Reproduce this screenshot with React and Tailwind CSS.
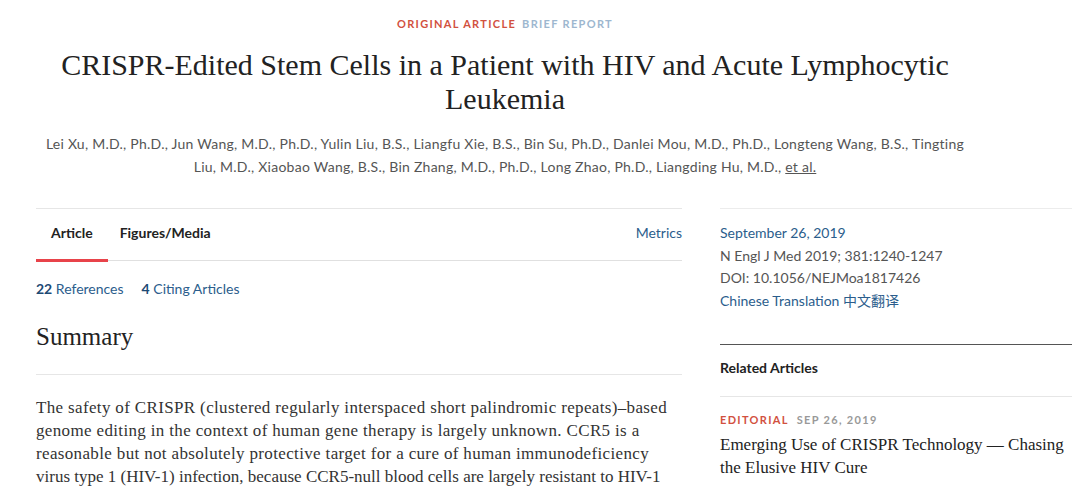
import React from 'react'

const summary = [
  'The safety of CRISPR (clustered regularly interspaced short palindromic repeats)–based',
  'genome editing in the context of human gene therapy is largely unknown. CCR5 is a',
  'reasonable but not absolutely protective target for a cure of human immunodeficiency',
]

export default function App() {
  const sans = { fontFamily: '"Lato", "Noto Sans", sans-serif' }
  return (
    <div className="w-[1080px] h-[486px] overflow-hidden bg-white text-[#333]" style={sans}>
      <header className="w-[1010px] text-center pt-[16px]">
        <div className="text-[11px] font-bold tracking-[0.12em] leading-[16px]">
          <span className="text-[#d2513f]">ORIGINAL ARTICLE</span>
          <span className="ml-[6px] text-[#9db7cf]">BRIEF REPORT</span>
        </div>
        <h1 className="mt-[16px] mx-auto w-[900px] text-[30px] leading-[34px] text-[#222] font-['Liberation_Serif',serif]">
          CRISPR-Edited Stem Cells in a Patient with HIV and Acute Lymphocytic Leukemia
        </h1>
        <p className="mt-[16px] mx-auto w-[960px] text-[14px] leading-[23px] tracking-[0.25px] text-[#555]">
          Lei Xu, M.D., Ph.D., Jun Wang, M.D., Ph.D., Yulin Liu, B.S., Liangfu Xie, B.S., Bin Su, Ph.D., Danlei Mou, M.D., Ph.D., Longteng Wang, B.S., Tingting
          <br />
          Liu, M.D., Xiaobao Wang, B.S., Bin Zhang, M.D., Ph.D., Long Zhao, Ph.D., Liangding Hu, M.D.,{' '}
          <span className="underline">et al.</span>
        </p>
      </header>

      <div className="mt-[30px] flex gap-[38px] pl-[36px]">
        <main className="w-[646px]">
          <div className="border-t border-[#e6e6e6]">
            <nav className="flex items-end border-b border-[#e0e0e0] h-[52px]">
              <span className="relative px-[15px] pb-[17px] text-[14px] font-bold text-[#222]">
                Article
                <span className="absolute left-0 right-0 bottom-[-2px] h-[3px] bg-[#e8434a]" />
              </span>
              <span className="px-[12px] pb-[17px] text-[14px] font-bold text-[#222]">Figures/Media</span>
              <span className="ml-auto pb-[17px] text-[14px] text-[#2b5d8c]">Metrics</span>
            </nav>
          </div>
          <div className="mt-[18px] flex gap-[18px] text-[14px] text-[#2b5d8c] leading-[20px]">
            <span><b className="font-bold text-[#1d4a75]">22</b> References</span>
            <span><b className="font-bold text-[#1d4a75]">4</b> Citing Articles</span>
          </div>
          <h2 className="mt-[23px] text-[25px] leading-[30px] text-[#222] font-['Liberation_Serif',serif]">Summary</h2>
          <div className="mt-[22px] border-t border-[#e6e6e6]" />
          <p className="mt-[21px] text-[17px] leading-[23px] tracking-[0.35px] text-[#333] font-['Liberation_Serif',serif]">
            {summary.map((line) => (
              <span key={line} className="block whitespace-nowrap">{line}</span>
            ))}
            <span className="block whitespace-nowrap tracking-normal">
              virus type 1 (HIV-1) infection, because CCR5-null blood cells are largely resistant to HIV-1
            </span>
          </p>
        </main>

        <aside className="w-[352px]">
          <div className="border-t border-[#ececec] pt-[13px] text-[14px] leading-[22.5px]">
            <div className="text-[#2b5d8c]">September 26, 2019</div>
            <div className="text-[#555]">N Engl J Med 2019; 381:1240-1247</div>
            <div className="text-[#555]">DOI: 10.1056/NEJMoa1817426</div>
            <div className="text-[#2b5d8c]" style={{ fontFamily: '"Lato", "Noto Sans CJK SC", sans-serif' }}>
              Chinese Translation 中文翻译
            </div>
          </div>
          <div className="mt-[32px] border-t border-[#555]" />
          <div className="pt-[13px] pb-[18px] text-[14px] font-bold text-[#222] leading-[20px]">Related Articles</div>
          <div className="border-t border-[#e6e6e6] pt-[15px]">
            <div className="text-[11px] font-bold tracking-[0.12em] leading-[16px]">
              <span className="text-[#d2513f]">EDITORIAL</span>
              <span className="ml-[8px] text-[#999]">SEP 26, 2019</span>
            </div>
            <p className="mt-[5px] text-[17px] leading-[23px] text-[#222] font-['Liberation_Serif',serif]">
              Emerging Use of CRISPR Technology — Chasing the Elusive HIV Cure
            </p>
          </div>
        </aside>
      </div>
    </div>
  )
}
